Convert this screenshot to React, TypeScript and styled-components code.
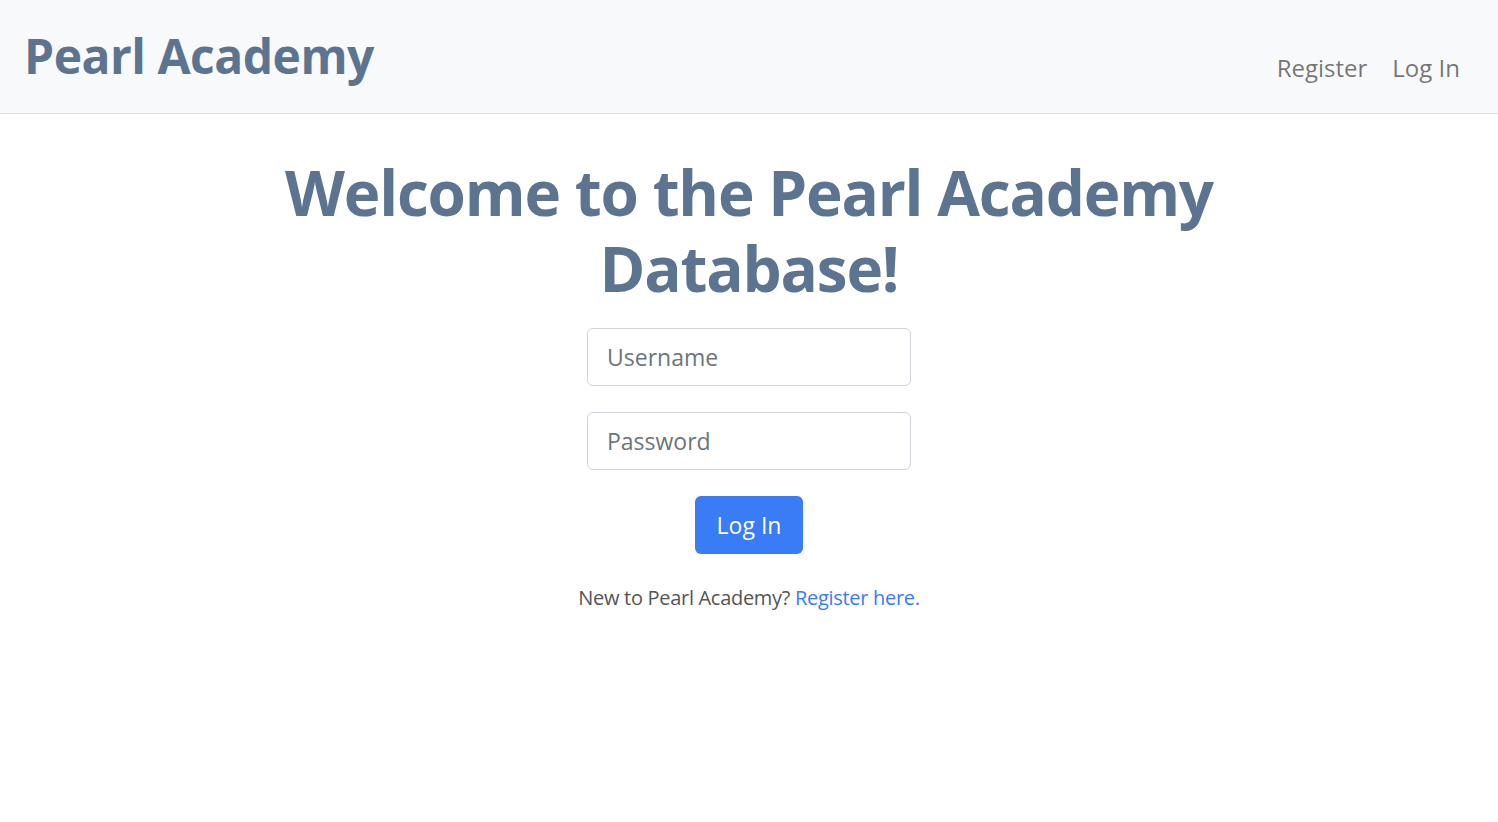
import React from 'react'
import styled, { createGlobalStyle } from 'styled-components'

const GlobalStyle = createGlobalStyle`
  html, body {
    margin: 0;
    padding: 0;
    background: #ffffff;
    font-family: 'Open Sans', 'Noto Sans', Arial, sans-serif;
  }
  * {
    box-sizing: border-box;
  }
`

const Navbar = styled.nav`
  display: flex;
  align-items: center;
  justify-content: space-between;
  height: 114px;
  padding: 0 38px 0 24px;
  background: #f8f9fa;
  border-bottom: 1px solid #dee2e6;
`

const Brand = styled.a`
  font-size: 48px;
  font-weight: 700;
  color: #5d7490;
  text-decoration: none;
  letter-spacing: -0.5px;
  margin-top: -2px;
`

const NavLinks = styled.ul`
  display: flex;
  gap: 25px;
  list-style: none;
  margin: 22px 0 0;
  padding: 0;
`

const NavLink = styled.a`
  font-size: 24px;
  color: rgba(0, 0, 0, 0.55);
  text-decoration: none;
`

const Main = styled.main`
  display: flex;
  flex-direction: column;
  align-items: center;
  padding-top: 40px;
`

const Heading = styled.h1`
  margin: 0 0 22px;
  max-width: 1000px;
  text-align: center;
  font-size: 62px;
  line-height: 76px;
  font-weight: 700;
  color: #5d7490;
  letter-spacing: -1.2px;
`

const Form = styled.form`
  display: flex;
  flex-direction: column;
  align-items: center;
  gap: 26px;
  width: 324px;
`

const Input = styled.input`
  width: 100%;
  height: 58px;
  padding: 0 19px;
  font-family: inherit;
  font-size: 23px;
  color: #212529;
  background: #fff;
  border: 1px solid #ced4da;
  border-radius: 6px;
  outline: none;

  &::placeholder {
    color: #6c757d;
  }
`

const SubmitButton = styled.button`
  height: 58px;
  padding: 0 22px;
  font-family: inherit;
  font-size: 23px;
  color: #fff;
  background: #3a7bf6;
  border: none;
  border-radius: 6px;
  cursor: pointer;
`

const Footnote = styled.p`
  margin: 30px 0 0;
  font-size: 20px;
  color: #555;
  letter-spacing: -0.3px;
`

const FootLink = styled.a`
  color: #3a7bf6;
  text-decoration: none;
`

export default function App() {
  return (
    <>
      <GlobalStyle />
      <Navbar>
        <Brand href="#">Pearl Academy</Brand>
        <NavLinks>
          <li>
            <NavLink href="#">Register</NavLink>
          </li>
          <li>
            <NavLink href="#">Log In</NavLink>
          </li>
        </NavLinks>
      </Navbar>
      <Main>
        <Heading>Welcome to the Pearl Academy Database!</Heading>
        <Form onSubmit={e => e.preventDefault()}>
          <Input type="text" placeholder="Username" />
          <Input type="password" placeholder="Password" />
          <SubmitButton type="submit">Log In</SubmitButton>
        </Form>
        <Footnote>
          New to Pearl Academy? <FootLink href="#">Register here.</FootLink>
        </Footnote>
      </Main>
    </>
  )
}
